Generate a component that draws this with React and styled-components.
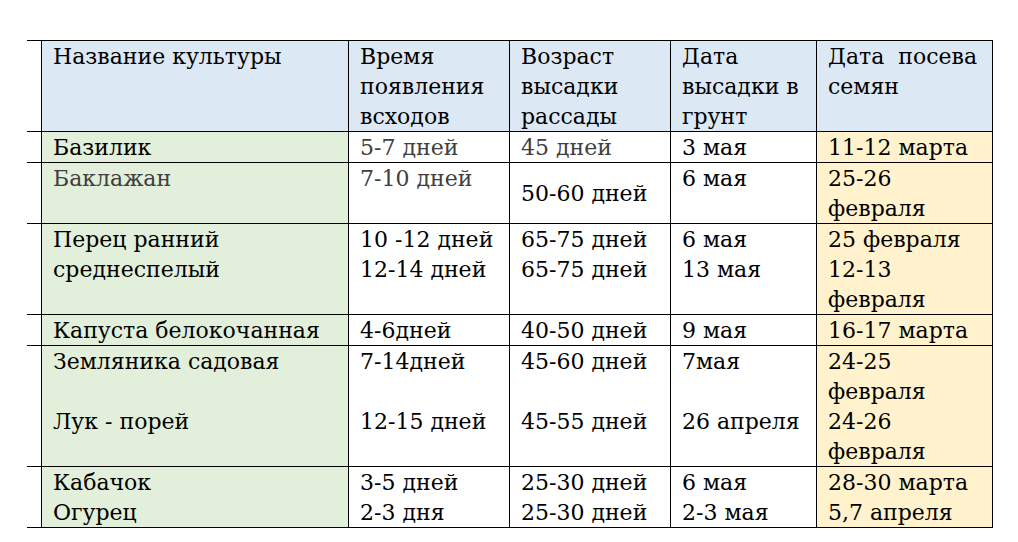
import React from "react";
import styled, { createGlobalStyle } from "styled-components";

const GlobalStyle = createGlobalStyle`
  body {
    margin: 0;
    background: #ffffff;
    font-family: "DejaVu Serif", "Liberation Serif", serif;
  }
`;

const Page = styled.div`
  padding: 40px 0 0 27px;
`;

const Sheet = styled.div`
  width: 966px;
  border-bottom: 1.5px solid #000;
`;

const Row = styled.div`
  display: grid;
  grid-template-columns: 14px 307px 161px 161px 146px 177px;
  border-top: 1.5px solid #000;
`;

/* header row is light blue, first column green, last column yellow */
const bgFor = (kind) =>
  ({ head: "#dde8f5", name: "#e2efda", sow: "#fff2cc", plain: "#ffffff" }[kind] || "#ffffff");

const Cell = styled.div`
  box-sizing: border-box;
  border-left: 1.5px solid #000;
  border-right: ${(p) => (p.$last ? "1.5px solid #000" : "none")};
  padding: 0 2px 0 11px;
  display: flex;
  flex-direction: column;
  justify-content: ${(p) => (p.$middle ? "center" : "flex-start")};
  background: ${(p) => bgFor(p.$kind)};
  color: ${(p) => (p.$grey ? "#404040" : "#000")};
  overflow: hidden;
`;

const Line = styled.span`
  display: block;
  height: 30px;
  font-family: "DejaVu Serif", "Liberation Serif", serif;
  font-size: 22px;
  line-height: 31px;
  white-space: nowrap;
`;

/* the horizontal rules stick out past the left edge of the table */
const Spacer = styled.div`
  background: #fff;
`;

const header = [
  ["Название культуры"],
  ["Время", "появления", "всходов"],
  ["Возраст", "высадки", "рассады"],
  ["Дата", "высадки в", "грунт"],
  ["Дата\u00a0 посева", "семян"],
];

const rows = [
  [
    { t: ["Базилик"] },
    { t: ["5-7 дней"], grey: true },
    { t: ["45 дней"], grey: true },
    { t: ["3 мая"] },
    { t: ["11-12 марта"] },
  ],
  [
    { t: ["Баклажан"], grey: true },
    { t: ["7-10 дней"], grey: true },
    { t: ["50-60 дней"], middle: true },
    { t: ["6 мая"] },
    { t: ["25-26", "февраля"] },
  ],
  [
    { t: ["Перец ранний", "среднеспелый"] },
    { t: ["10 -12 дней", "12-14 дней"] },
    { t: ["65-75 дней", "65-75 дней"] },
    { t: ["6 мая", "13 мая"] },
    { t: ["25 февраля", "12-13", "февраля"] },
  ],
  [
    { t: ["Капуста белокочанная"] },
    { t: ["4-6дней"] },
    { t: ["40-50 дней"] },
    { t: ["9 мая"] },
    { t: ["16-17 марта"] },
  ],
  [
    { t: ["Земляника садовая", "", "Лук - порей"] },
    { t: ["7-14дней", "", "12-15 дней"] },
    { t: ["45-60 дней", "", "45-55 дней"] },
    { t: ["7мая", "", "26 апреля"] },
    { t: ["24-25", "февраля", "24-26", "февраля"] },
  ],
  [
    { t: ["Кабачок", "Огурец"] },
    { t: ["3-5 дней", "2-3 дня"] },
    { t: ["25-30 дней", "25-30 дней"] },
    { t: ["6 мая", "2-3 мая"] },
    { t: ["28-30 марта", "5,7 апреля"] },
  ],
];

const kindFor = (i) => (i === 0 ? "name" : i === 4 ? "sow" : "plain");

const Lines = ({ items }) => items.map((l, i) => <Line key={i}>{l}</Line>);

export default function App() {
  return (
    <>
      <GlobalStyle />
      <Page lang="ru">
        <Sheet>
          <Row>
            <Spacer />
            {header.map((h, i) => (
              <Cell key={i} $kind="head" $last={i === 4}>
                <Lines items={h} />
              </Cell>
            ))}
          </Row>
          {rows.map((row, r) => (
            <Row key={r}>
              <Spacer />
              {row.map((c, i) => (
                <Cell
                  key={i}
                  $kind={kindFor(i)}
                  $grey={c.grey}
                  $middle={c.middle}
                  $last={i === 4}
                >
                  <Lines items={c.t} />
                </Cell>
              ))}
            </Row>
          ))}
        </Sheet>
      </Page>
    </>
  );
}
